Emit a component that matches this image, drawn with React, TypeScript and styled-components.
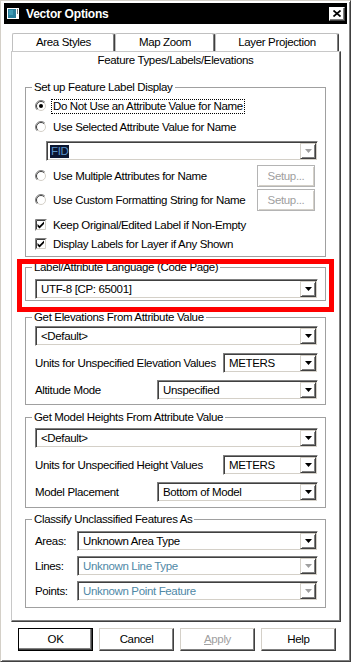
import React from "react";
import styled, { createGlobalStyle } from "styled-components";

const GlobalStyle = createGlobalStyle`
  html, body {
    margin: 0;
    padding: 0;
    background: #fff;
  }
  body {
    font-family: "Liberation Sans", Arial, sans-serif;
    font-size: 11.5px;
    letter-spacing: -0.35px;
    color: #000;
  }
  * {
    box-sizing: border-box;
  }
`;

const Window = styled.div`
  width: 351px;
  height: 662px;
  display: flex;
  flex-direction: column;
  background: #fff;
  border-top: 1px solid #d4d0c8;
  border-left: 1px solid #d4d0c8;
  border-right: 1px solid #404040;
  border-bottom: 1px solid #404040;
  box-shadow: inset 1px 1px #fff, inset -1px -1px #808080;
  padding: 2px 3px 0 3px;
`;

const TitleBar = styled.div`
  flex: none;
  height: 21px;
  background: #000;
  color: #fff;
  display: flex;
  align-items: center;
  padding: 0 2px 0 3px;
`;

const TitleText = styled.div`
  flex: 1;
  margin-left: 7px;
  font-weight: bold;
  font-size: 12px;
  line-height: 14px;
  letter-spacing: -0.2px;
`;

const CloseButton = styled.div`
  width: 16px;
  height: 14px;
  background: #fff;
  border-top: 1px solid #fff;
  border-left: 1px solid #fff;
  border-right: 1px solid #404040;
  border-bottom: 1px solid #404040;
  box-shadow: inset -1px -1px #808080;
  display: flex;
  align-items: center;
  justify-content: center;
  padding-right: 1px;
  padding-bottom: 1px;
`;

const Body = styled.div`
  padding: 9px 6px 0 7px;
  display: flex;
  flex-direction: column;
`;

const TabRow = styled.div`
  display: flex;
  height: 18px;
  padding-left: 1px;
`;

const BackTab = styled.div<{ $w: number }>`
  width: ${(p) => p.$w}px;
  height: 18px;
  border-top: 1px solid #c0c0c0;
  border-left: 1px solid #c0c0c0;
  border-right: 1px solid #404040;
  box-shadow: inset -1px 0 #808080, inset 1px 1px #fff;
  border-radius: 2px 2px 0 0;
  text-align: center;
  line-height: 17px;
`;

const Panel = styled.div`
  display: flex;
  flex-direction: column;
  border-top: 1px solid #c8c8c8;
  border-left: 1px solid #c8c8c8;
  border-right: 1px solid #404040;
  border-bottom: 1px solid #404040;
  box-shadow: inset -1px -1px #808080;
  padding: 0 14px 13px 13px;
`;

const TabLabel = styled.div`
  height: 17px;
  line-height: 17px;
  text-align: center;
  margin-bottom: 12px;
`;

const Group = styled.fieldset<{ $mt: number; $pt: number; $pb: number }>`
  margin: ${(p) => p.$mt}px 0 0 0;
  padding: ${(p) => p.$pt}px 7px ${(p) => p.$pb}px 9px;
  border: 1px solid #a0a0a0;
  min-width: 0;
  display: flex;
  flex-direction: column;
`;

const Legend = styled.legend`
  padding: 0 2px;
  margin-left: -3px;
  height: 13px;
  line-height: 13px;
`;

const Stack = styled.div<{ $gap: number }>`
  display: flex;
  flex-direction: column;
  gap: ${(p) => p.$gap}px;
`;

const OptionRow = styled.div<{ $mt?: number; $h?: number }>`
  display: flex;
  align-items: center;
  margin-top: ${(p) => p.$mt ?? 0}px;
  height: ${(p) => p.$h ?? 16}px;
`;

const OptLabel = styled.span<{ $focus?: boolean }>`
  margin-left: 4px;
  line-height: 13px;
  padding: 0 1px;
  border: 1px dotted ${(p) => (p.$focus ? "#000" : "transparent")};
`;

const SetupButton = styled.div`
  margin-left: auto;
  margin-right: 3px;
  width: 58px;
  height: 22px;
  border: 1px solid #b4b4b4;
  box-shadow: inset 1px 1px #fff, inset -1px -1px #d4d0c8;
  color: #a0a0a0;
  text-align: center;
  line-height: 20px;
`;

const FieldRow = styled.div`
  display: flex;
  align-items: center;
  justify-content: space-between;
  height: 20px;
`;

const ComboBox = styled.div<{ $w?: number; $ml?: number }>`
  ${(p) => (p.$w ? `width: ${p.$w}px; flex: none;` : "flex: 1;")}
  margin-left: ${(p) => p.$ml ?? 0}px;
  height: 20px;
  display: flex;
  align-items: center;
  background: #fff;
  border-top: 1px solid #808080;
  border-left: 1px solid #808080;
  border-right: 1px solid #fff;
  border-bottom: 1px solid #fff;
  box-shadow: inset 1px 1px #404040, inset -1px -1px #d4d0c8;
  padding: 1px;
`;

const ComboText = styled.div<{ $disabled?: boolean }>`
  flex: 1;
  padding-left: 4px;
  line-height: 16px;
  white-space: nowrap;
  overflow: hidden;
  color: ${(p) => (p.$disabled ? "#4f88a6" : "#000")};
`;

const Selected = styled.span`
  background: #0b1630;
  color: #5b93c8;
  padding: 0 1px;
  margin-left: -2px;
  display: inline-block;
  line-height: 13px;
`;

const DropButton = styled.div`
  width: 16px;
  height: 16px;
  flex: none;
  background: #fff;
  border-top: 1px solid #d4d0c8;
  border-left: 1px solid #d4d0c8;
  border-right: 1px solid #404040;
  border-bottom: 1px solid #404040;
  box-shadow: inset 1px 1px #fff, inset -1px -1px #808080;
  display: flex;
  align-items: center;
  justify-content: center;
`;

const HighlightWrap = styled.div`
  position: relative;
  margin-top: 4px;
  display: flex;
  flex-direction: column;
`;

const Highlight = styled.div`
  position: absolute;
  left: -8px;
  right: -8px;
  top: -2px;
  bottom: -11px;
  border: 5px solid #ff0000;
  pointer-events: none;
  z-index: 1;
`;

const ButtonRow = styled.div`
  display: flex;
  justify-content: flex-end;
  gap: 6px;
  margin-top: 6px;
  padding-right: 5px;
`;

const PushButton = styled.div<{ $default?: boolean; $disabled?: boolean }>`
  width: 75px;
  height: 23px;
  background: #fff;
  text-align: center;
  line-height: 21px;
  color: ${(p) => (p.$disabled ? "#a0a0a0" : "#000")};
  ${(p) =>
    p.$default
      ? `border: 1px solid #000; box-shadow: inset -1px -1px #404040, inset -2px -2px #808080;`
      : `border-top: 1px solid #d4d0c8; border-left: 1px solid #d4d0c8;
         border-right: 1px solid #404040; border-bottom: 1px solid #404040;
         box-shadow: inset -1px -1px #808080;`}
  u {
    text-decoration: underline;
  }
`;

const AppIcon = () => (
  <svg width="12" height="11" viewBox="0 0 12 11">
    <rect x="0" y="0" width="12" height="11" fill="#fff" />
    <rect x="1" y="1" width="8" height="9" fill="#2a7f9c" />
    <rect x="2" y="2" width="4" height="5" fill="#3f9bb5" />
    <rect x="10" y="1" width="1" height="5" fill="#7a7a7a" />
  </svg>
);

const CloseGlyph = () => (
  <svg width="8" height="7" viewBox="0 0 8 7">
    <path d="M0.5 0.5 L7.5 6.5 M7.5 0.5 L0.5 6.5" stroke="#000" strokeWidth="1.7" />
  </svg>
);

const Radio = ({ checked }: { checked?: boolean }) => (
  <svg width="12" height="12" viewBox="0 0 12 12" style={{ flex: "none" }}>
    <circle cx="6" cy="6" r="5.5" fill="#fff" />
    <path d="M2.1 9.9 A5.5 5.5 0 0 1 9.9 2.1" stroke="#808080" fill="none" />
    <path d="M2.8 9.2 A4.5 4.5 0 0 1 9.2 2.8" stroke="#404040" fill="none" />
    <path d="M9.2 2.8 A4.5 4.5 0 0 1 2.8 9.2" stroke="#d4d0c8" fill="none" />
    {checked && <circle cx="6" cy="6" r="2" fill="#000" />}
  </svg>
);

const Check = () => (
  <svg width="12" height="12" viewBox="0 0 12 12" style={{ flex: "none" }}>
    <rect x="0" y="0" width="12" height="12" fill="#fff" />
    <path d="M0.5 11.5 V0.5 H11.5" stroke="#808080" fill="none" />
    <path d="M1.5 10.5 V1.5 H10.5" stroke="#404040" fill="none" />
    <path d="M1.5 10.5 H10.5 V1.5" stroke="#d4d0c8" fill="none" />
    <polygon points="2.5,5 4.5,7 9,2.5 9,5 4.5,9.5 2.5,7.5" fill="#000" />
  </svg>
);

const Arrow = ({ disabled }: { disabled?: boolean }) => (
  <svg width="7" height="4" viewBox="0 0 7 4">
    <polygon points="0,0 7,0 3.5,4" fill={disabled ? "#a0a0a0" : "#000"} />
  </svg>
);

type ComboProps = {
  value: string;
  w?: number;
  ml?: number;
  disabled?: boolean;
  selected?: boolean;
};

const Combo = ({ value, w, ml, disabled, selected }: ComboProps) => (
  <ComboBox $w={w} $ml={ml}>
    <ComboText $disabled={disabled}>
      {selected ? <Selected>{value}</Selected> : value}
    </ComboText>
    <DropButton>
      <Arrow disabled={disabled} />
    </DropButton>
  </ComboBox>
);

const App: React.FC = () => {
  return (
    <>
      <GlobalStyle />
      <Window>
        <TitleBar>
          <AppIcon />
          <TitleText>Vector Options</TitleText>
          <CloseButton>
            <CloseGlyph />
          </CloseButton>
        </TitleBar>
        <Body>
          <TabRow>
            <BackTab $w={103}>Area Styles</BackTab>
            <BackTab $w={100}>Map Zoom</BackTab>
            <BackTab $w={124}>Layer Projection</BackTab>
          </TabRow>
          <Panel>
            <TabLabel>Feature Types/Labels/Elevations</TabLabel>

            <Group $mt={0} $pt={4} $pb={4}>
              <Legend>Set up Feature Label Display</Legend>
              <OptionRow>
                <Radio checked />
                <OptLabel $focus>Do Not Use an Attribute Value for Name</OptLabel>
              </OptionRow>
              <OptionRow $mt={5}>
                <Radio />
                <OptLabel>Use Selected Attribute Value for Name</OptLabel>
              </OptionRow>
              <OptionRow $mt={6} $h={20}>
                <Combo value="FID" ml={11} disabled selected />
              </OptionRow>
              <OptionRow $mt={4} $h={22}>
                <Radio />
                <OptLabel>Use Multiple Attributes for Name</OptLabel>
                <SetupButton>Setup...</SetupButton>
              </OptionRow>
              <OptionRow $mt={2} $h={22}>
                <Radio />
                <OptLabel>Use Custom Formatting String for Name</OptLabel>
                <SetupButton>Setup...</SetupButton>
              </OptionRow>
              <OptionRow $mt={6}>
                <Check />
                <OptLabel>Keep Original/Edited Label if Non-Empty</OptLabel>
              </OptionRow>
              <OptionRow $mt={3}>
                <Check />
                <OptLabel>Display Labels for Layer if Any Shown</OptLabel>
              </OptionRow>
            </Group>

            <HighlightWrap>
              <Group $mt={0} $pt={5} $pb={1}>
                <Legend>Label/Attribute Language (Code Page)</Legend>
                <Combo value="UTF-8 [CP: 65001]" />
              </Group>
              <Highlight />
            </HighlightWrap>

            <Group $mt={10} $pt={2} $pb={4}>
              <Legend>Get Elevations From Attribute Value</Legend>
              <Stack $gap={7}>
                <Combo value="<Default>" />
                <FieldRow>
                  <span>Units for Unspecified Elevation Values</span>
                  <Combo value="METERS" w={95} />
                </FieldRow>
                <FieldRow>
                  <span>Altitude Mode</span>
                  <Combo value="Unspecified" w={161} />
                </FieldRow>
              </Stack>
            </Group>

            <Group $mt={6} $pt={4} $pb={5}>
              <Legend>Get Model Heights From Attribute Value</Legend>
              <Stack $gap={7}>
                <Combo value="<Default>" />
                <FieldRow>
                  <span>Units for Unspecified Height Values</span>
                  <Combo value="METERS" w={95} />
                </FieldRow>
                <FieldRow>
                  <span>Model Placement</span>
                  <Combo value="Bottom of Model" w={161} />
                </FieldRow>
              </Stack>
            </Group>

            <Group $mt={5} $pt={5} $pb={6}>
              <Legend>Classify Unclassified Features As</Legend>
              <Stack $gap={5}>
                <FieldRow>
                  <span>Areas:</span>
                  <Combo value="Unknown Area Type" w={241} />
                </FieldRow>
                <FieldRow>
                  <span>Lines:</span>
                  <Combo value="Unknown Line Type" w={241} disabled />
                </FieldRow>
                <FieldRow>
                  <span>Points:</span>
                  <Combo value="Unknown Point Feature" w={241} disabled />
                </FieldRow>
              </Stack>
            </Group>
          </Panel>
          <ButtonRow>
            <PushButton $default>OK</PushButton>
            <PushButton>Cancel</PushButton>
            <PushButton $disabled>
              <u>A</u>pply
            </PushButton>
            <PushButton>Help</PushButton>
          </ButtonRow>
        </Body>
      </Window>
    </>
  );
};

export default App;
